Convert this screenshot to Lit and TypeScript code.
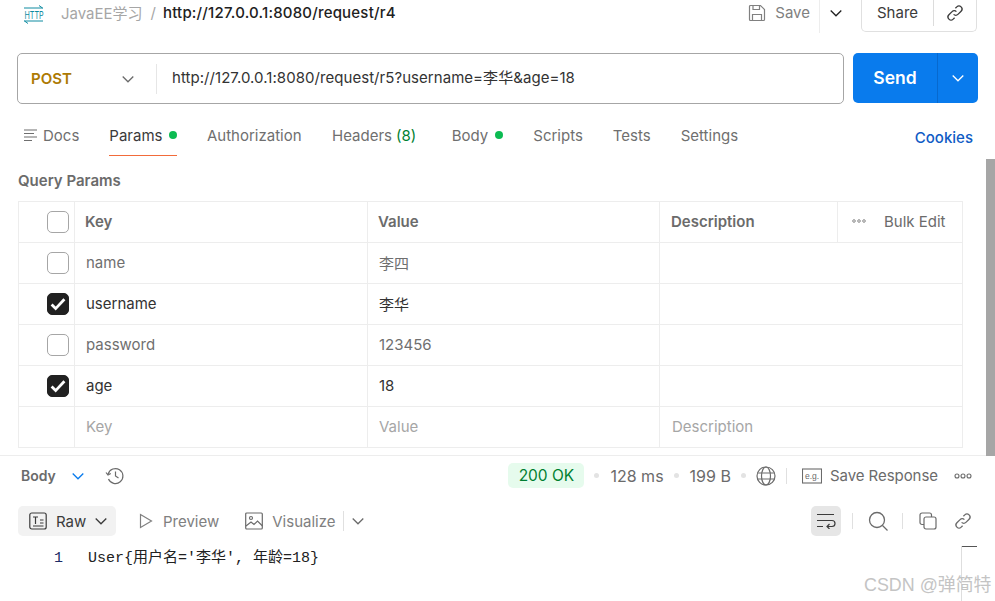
import { LitElement, html, css } from "lit";
import { customElement } from "lit/decorators.js";

const chev = () => html`<svg class="chev" viewBox="0 0 16 16" width="16" height="16"><path d="M2.700 5.500L8 10.800l5.300-5.300" fill="none" stroke="currentColor" stroke-width="1.300"/></svg>`;
const link = (c: string) => html`<svg viewBox="0 0 20 20" width="20" height="20" fill="none" stroke="${c}" stroke-width="1.300"><path d="M8.600 11.400a3 3 0 0 0 4.300 0l3.200-3.200a3 3 0 0 0-4.300-4.300L10.400 5.300"/><path d="M11.400 8.600a3 3 0 0 0-4.300 0l-3.200 3.200a3 3 0 0 0 4.300 4.300l1.400-1.400"/></svg>`;

const rows = [
  { on: false, k: "name", v: "李四" },
  { on: true, k: "username", v: "李华" },
  { on: false, k: "password", v: "123456" },
  { on: true, k: "age", v: "18" },
];

@customElement("app-root")
export class AppRoot extends LitElement {
  static styles = css`
    :host { display: block; position: relative; width: 995px; height: 601px; overflow: hidden; background: #fff;
      font-family: Inter, "Noto Sans CJK SC", sans-serif; font-size: 15px; color: #6b6b6b; }
    .top { display: flex; align-items: flex-start; height: 33px; padding-left: 23px; }
    .crumb { display: flex; align-items: center; height: 26px; }
    .crumb svg { margin-right: 16px; }
    .crumb span { padding-bottom: 2px; }
    .coll { color: #a6a6a6; }
    .sep { color: #a6a6a6; margin: 0 7px 0 8px; }
    .cur { color: #212121; font-weight: 500; letter-spacing: .2px; }
    .right { margin-left: auto; display: flex; align-items: flex-start; margin-right: 18px; }
    .save { display: flex; align-items: center; height: 26px; gap: 8px; color: #808080; padding-right: 9px; }
    .save span, .share span { padding-bottom: 2px; }
    .savechev { display: flex; align-items: center; justify-content: center; height: 33px; width: 32px; border-left: 1px solid #ededed; color: #212121; box-sizing: border-box; padding-bottom: 7px; margin-right: 10px; }
    .share { display: flex; height: 32px; border: 1px solid #e0e0e0; border-top: 0; border-radius: 0 0 5px 5px; box-sizing: border-box; width: 116px; color: #3b3b3b; }
    .share span { display: flex; align-items: center; justify-content: center; width: 72px; height: 26px; border-right: 1px solid #dcdcdc; box-sizing: border-box; }
    .share i { display: flex; flex: 1; align-items: center; justify-content: center; height: 26px; }

    .urlrow { display: flex; margin: 20px 17px 0 17px; gap: 9px; height: 51px; }
    .url { flex: 1; display: flex; align-items: center; border: 1px solid #a6a6a6; border-radius: 5px; height: 51px; box-sizing: border-box; }
    .method { width: 139px; display: flex; align-items: center; justify-content: space-between; padding: 0 20px 0 13px; box-sizing: border-box; color: #ad7a03; font-weight: 600; height: 30px; border-right: 1px solid #e6e6e6; }
    .method span { padding-bottom: 1px; }
    .method .chev { color: #6b6b6b; }
    .addr { padding: 0 0 4px 15px; color: #333; letter-spacing: .05px; }
    .send { width: 125px; height: 50px; display: flex; background: #097bed; border-radius: 5px; color: #fff; font-size: 17.500px; }
    .send b { font-weight: 600; width: 84px; text-align: center; line-height: 49px; border-right: 1px solid #0769cf; }
    .send i { flex: 1; display: flex; align-items: center; justify-content: center; }

    .tabs { display: flex; align-items: flex-start; margin-top: 19px; padding: 0 22px 0 23px; height: 37px; box-sizing: border-box; }
    .tab { display: flex; align-items: center; height: 33px; padding-bottom: 8px; box-sizing: border-box; white-space: nowrap; color: #6f6f6f; border-bottom: 1px solid transparent; margin-right: 30.500px; }
    .tab.docs { margin-right: 30px; }
    .tab.active { color: #3a3a3a; border-bottom-color: #f26b3a; margin-right: 29.500px; }
    .tab.headers { margin-right: 35.500px; }
    .tab.bodytab { margin-right: 30px; }
    .tab.scr { margin-right: 30px; }
    .dot { width: 8px; height: 8px; border-radius: 50%; background: #0cbb52; display: inline-block; margin-left: 7px; }
    .green { color: #007f31; margin-left: 4px; }
    .docicon { margin-right: 4px; }
    .cookies { margin-left: auto; color: #0f5cc5; font-weight: 500; padding-top: 5px; }

    .qp { margin: 12px 18px 0; font-weight: 600; color: #6b6b6b; line-height: 17px; }
    .table { margin: 12px 32px 0 18px; border: 1px solid #ededed; border-bottom: 0; }
    .row { display: grid; grid-template-columns: 56px 293px 292px 1fr; height: 41px; border-bottom: 1px solid #ededed; box-sizing: border-box; }
    .row > div { display: flex; align-items: center; border-right: 1px solid #ededed; box-sizing: border-box; padding: 0 0 2px 10px; min-width: 0; }
    .row > div:last-child { border-right: 0; }
    .row > div.chk { justify-content: flex-end; padding: 0 5px 0 0; }
    .hd { font-weight: 600; color: #6b6b6b; }
    .box { width: 22px; height: 22px; box-sizing: border-box; border: 1px solid #a6a6a6; border-radius: 5px; display: flex; align-items: center; justify-content: center; }
    .box.on { background: #212121; border-color: #212121; }
    .dim { color: #6f6f6f; }
    .dark { color: #333; }
    .ph { color: #a6a6a6; }
    .row > div.desc { padding: 0; align-items: stretch; }
    .desc span { display: flex; align-items: center; flex: 1; padding: 0 0 2px 11px; }
    .bulk { display: flex; align-items: center; width: 125px; border-left: 1px solid #ededed; font-weight: 400; flex: none; padding: 0 0 2px 14px; box-sizing: border-box; gap: 18px; }
    .row > div.key { padding-left: 11px; }
    .row > div.key2 { padding-left: 12px; }

    .resp { border-top: 1px solid #ededed; margin-top: 7px; height: 40px; display: flex; align-items: center; padding: 0 23px 0 21px; box-sizing: border-box; }
    .resp .lbl { font-weight: 600; font-size: 14px; }
    .resp .blue { color: #097bed; margin: 0 19px 0 14px; display: flex; }
    .badge { background: #e6fbed; color: #007f31; border-radius: 5px; font-size: 15.500px; height: 25px; width: 76px; display: flex; align-items: center; justify-content: center; }
    .bul { width: 5px; height: 5px; background: #e3e3e3; border-radius: 50%; margin: 0 11px 0 10px; }
    .bul.last { margin-right: 10px; }
    .meta { font-size: 16px; }
    .vsep { width: 1px; height: 16px; background: #e0e0e0; }
    .vsep.a { margin: 0 15px 0 10px; }
    .saver { margin: 0 16px 0 8px; letter-spacing: -.05px; }
    .rr { margin-left: auto; display: flex; align-items: center; }

    .tools { display: flex; align-items: center; height: 30px; margin: 11px 22px 0 18px; }
    .raw { display: flex; align-items: center; width: 98px; height: 30px; background: #f2f2f2; border-radius: 5px; color: #3b3b3b; padding-left: 11px; box-sizing: border-box; }
    .raw span { margin: 0 7px 0 9px; }
    .tbtn { display: flex; align-items: center; gap: 10px; color: #808080; }
    .tbtn.prev { margin-left: 23px; }
    .tbtn.vis { margin-left: 26px; gap: 9px; }
    .vsep.v1 { margin: 0 6px 0 7px; height: 20px; }
    .mchev { display: flex; }
    .wrap { width: 30px; height: 30px; background: #e6e6e6; border-radius: 5px; display: flex; align-items: center; justify-content: center; }
    .vsep.v2 { margin: 0 15px 0 11px; }
    .vsep.v3 { margin: 0 16px 0 14px; }
    .linkw { margin-left: 16px; display: flex; }
    .code { display: flex; margin-top: 14px; font-family: "Liberation Mono", "Noto Sans CJK SC", monospace; font-size: 15px; line-height: 18px; color: #212121; padding-left: 54px; }
    .code .ln { color: #1d2b66; width: 34px; }

    .scroll { position: absolute; right: 0; top: 159px; width: 9px; height: 297px; background: #a6a6a6; }
    .tick { position: absolute; left: 962px; top: 546px; width: 15px; height: 1px; background: #555; }
    .rule { position: absolute; left: 961px; top: 546px; width: 1px; height: 55px; background: #dedede; }
    .mark { position: absolute; left: 864px; top: 570px; color: #c4c4c4; font-size: 17.900px; font-family: "Liberation Sans", "Noto Sans CJK SC", sans-serif; white-space: nowrap; }
  `;

  render() {
    return html`
      <div class="top">
        <div class="crumb">
          <svg width="22" height="22" viewBox="0 0 22 22" fill="none" stroke="#0f8ba1" stroke-width="1"><path d="M1 6h19M16 3.500L19.500 6M1 19h19M1.500 19L5 21.500"/><text transform="translate(1.500 16.500) scale(.8 1.200)" font-size="9" font-family="Inter" stroke="none" fill="#0f8ba1">HTTP</text></svg>
          <span class="coll">JavaEE学习</span><span class="sep">/</span><span class="cur">http://127.0.0.1:8080/request/r4</span>
        </div>
        <div class="right">
          <div class="save">
            <svg width="20" height="20" viewBox="0 0 20 20" fill="none" stroke="#808080" stroke-width="1.200"><path d="M2.500 3.500a1 1 0 0 1 1-1h10l4 4v10a1 1 0 0 1-1 1h-13a1 1 0 0 1-1-1z"/><path d="M6 2.500v4h6.500v-4M5.500 17.500v-6h9v6"/></svg>
            <span>Save</span>
          </div>
          <div class="savechev">${chev()}</div>
          <div class="share"><span>Share</span><i>${link("#3b3b3b")}</i></div>
        </div>
      </div>

      <div class="urlrow">
        <div class="url">
          <div class="method"><span>POST</span>${chev()}</div>
          <div class="addr">http://127.0.0.1:8080/request/r5?username=李华&age=18</div>
        </div>
        <div class="send"><b>Send</b><i>${chev()}</i></div>
      </div>

      <div class="tabs">
        <div class="tab docs">
          <svg class="docicon" width="16" height="14" viewBox="0 0 16 14" fill="none" stroke="#6f6f6f" stroke-width="1.100"><path d="M1 2h13M1 5.500h10M1 9h13M1 12.500h8"/></svg>Docs
        </div>
        <div class="tab active">Params<i class="dot"></i></div>
        <div class="tab">Authorization</div>
        <div class="tab headers">Headers<span class="green">(8)</span></div>
        <div class="tab bodytab">Body<i class="dot"></i></div>
        <div class="tab scr">Scripts</div>
        <div class="tab scr">Tests</div>
        <div class="tab">Settings</div>
        <div class="cookies">Cookies</div>
      </div>

      <div class="qp">Query Params</div>

      <div class="table">
        <div class="row hd">
          <div class="chk"><span class="box"></span></div>
          <div>Key</div><div>Value</div>
          <div class="desc"><span>Description</span>
            <div class="bulk">
              <svg width="14" height="4" viewBox="0 0 14 4" fill="none" stroke="#6f6f6f" stroke-width=".8"><circle cx="2" cy="2" r="1.300"/><circle cx="7" cy="2" r="1.300"/><circle cx="12" cy="2" r="1.300"/></svg>
              Bulk Edit
            </div>
          </div>
        </div>
        ${rows.map((r) => html`
          <div class="row ${r.on ? "dark" : "dim"}">
            <div class="chk"><span class="box ${r.on ? "on" : ""}">${r.on ? html`<svg width="16" height="14" viewBox="0 0 15 13"><path d="M1.500 7l3.800 3.800L13.500 2" fill="none" stroke="#fff" stroke-width="2.600"/></svg>` : ""}</span></div>
            <div class="key">${r.k}</div><div class="key">${r.v}</div><div></div>
          </div>`)}
        <div class="row ph">
          <div class="chk"></div><div class="key">Key</div><div class="key">Value</div><div class="key2">Description</div>
        </div>
      </div>

      <div class="resp">
        <span class="lbl">Body</span>
        <span class="blue">${chev()}</span>
        <svg width="20" height="20" viewBox="0 0 20 20" fill="none" stroke="#6b6b6b" stroke-width="1.200"><path d="M3.200 8a7.500 7.500 0 1 1 .3 5M1 6.500L3 9l2.800-1.500M10.500 5.500V10l3 2"/></svg>
        <div class="rr">
          <div class="badge">200 OK</div><i class="bul"></i>
          <span class="meta">128 ms</span><i class="bul"></i>
          <span class="meta">199 B</span><i class="bul last"></i>
          <svg width="20" height="20" viewBox="0 0 20 20" fill="none" stroke="#6b6b6b" stroke-width="1.200"><circle cx="10" cy="10" r="9"/><ellipse cx="10" cy="10" rx="4.500" ry="9"/><path d="M1.500 7h17M1.500 13h17"/></svg>
          <i class="vsep a"></i>
          <svg width="20" height="16" viewBox="0 0 20 16" fill="none" stroke="#6b6b6b" stroke-width="1.100"><rect x=".5" y="1" width="19" height="14"/><text x="3" y="11" font-size="8.500" font-family="Liberation Sans" fill="#6b6b6b" stroke="none">e.g.</text></svg>
          <span class="saver">Save Response</span>
          <svg width="18" height="6" viewBox="0 0 18 6" fill="none" stroke="#6b6b6b" stroke-width="1.100"><circle cx="3" cy="3" r="2"/><circle cx="9" cy="3" r="2"/><circle cx="15" cy="3" r="2"/></svg>
        </div>
      </div>

      <div class="tools">
        <div class="raw">
          <svg width="18" height="18" viewBox="0 0 18 18" fill="none" stroke="#3b3b3b" stroke-width="1.200"><rect x=".8" y="1" width="16.400" height="16" rx="2"/><path d="M4 5h5M6.500 5v7M11 8h3.500M11 11h3.500M4 14h10.500"/></svg>
          <span>Raw</span>${chev()}
        </div>
        <div class="tbtn prev">
          <svg width="14" height="16" viewBox="0 0 14 16" fill="none" stroke="#808080" stroke-width="1.200"><path d="M1.500 1.500l11 6.500-11 6.500z"/></svg><span>Preview</span>
        </div>
        <div class="tbtn vis">
          <svg width="18" height="18" viewBox="0 0 18 18" fill="none" stroke="#6b6b6b" stroke-width="1.200"><rect x=".7" y="1" width="16.600" height="16" rx="1"/><circle cx="6" cy="6" r="1.500"/><path d="M1 14l5-4 3 2.500 3.500-3.500 5 5"/></svg><span>Visualize</span>
        </div>
        <i class="vsep v1"></i>
        <span class="mchev">${chev()}</span>
        <div class="rr">
          <div class="wrap"><svg width="20" height="16" viewBox="0 0 20 16" fill="none" stroke="#3b3b3b" stroke-width="1.200"><path d="M1 1.500h17M1 7.500h15a2.800 2.800 0 0 1 0 6h-5M13.500 11L11 13.500l2.500 2.500M1 13.500h6"/></svg></div>
          <i class="vsep v2"></i>
          <svg width="20" height="20" viewBox="0 0 20 20" fill="none" stroke="#6b6b6b" stroke-width="1.300"><circle cx="9" cy="9" r="7.500"/><path d="M14.500 14.500l5 5"/></svg>
          <i class="vsep v3"></i>
          <svg width="18" height="18" viewBox="0 0 18 18" fill="none" stroke="#6b6b6b" stroke-width="1.200"><rect x="5" y="5" width="12" height="12" rx="2"/><path d="M5 12.500H3a2 2 0 0 1-2-2V3a2 2 0 0 1 2-2h7.500a2 2 0 0 1 2 2v2"/></svg>
          <span class="linkw">${link("#6b6b6b")}</span>
        </div>
      </div>

      <div class="code"><span class="ln">1</span><span>User{用户名='李华', 年龄=18}</span></div>

      <div class="scroll"></div>
      <div class="rule"></div><div class="tick"></div>
      <div class="mark">CSDN @弹简特</div>
    `;
  }
}
